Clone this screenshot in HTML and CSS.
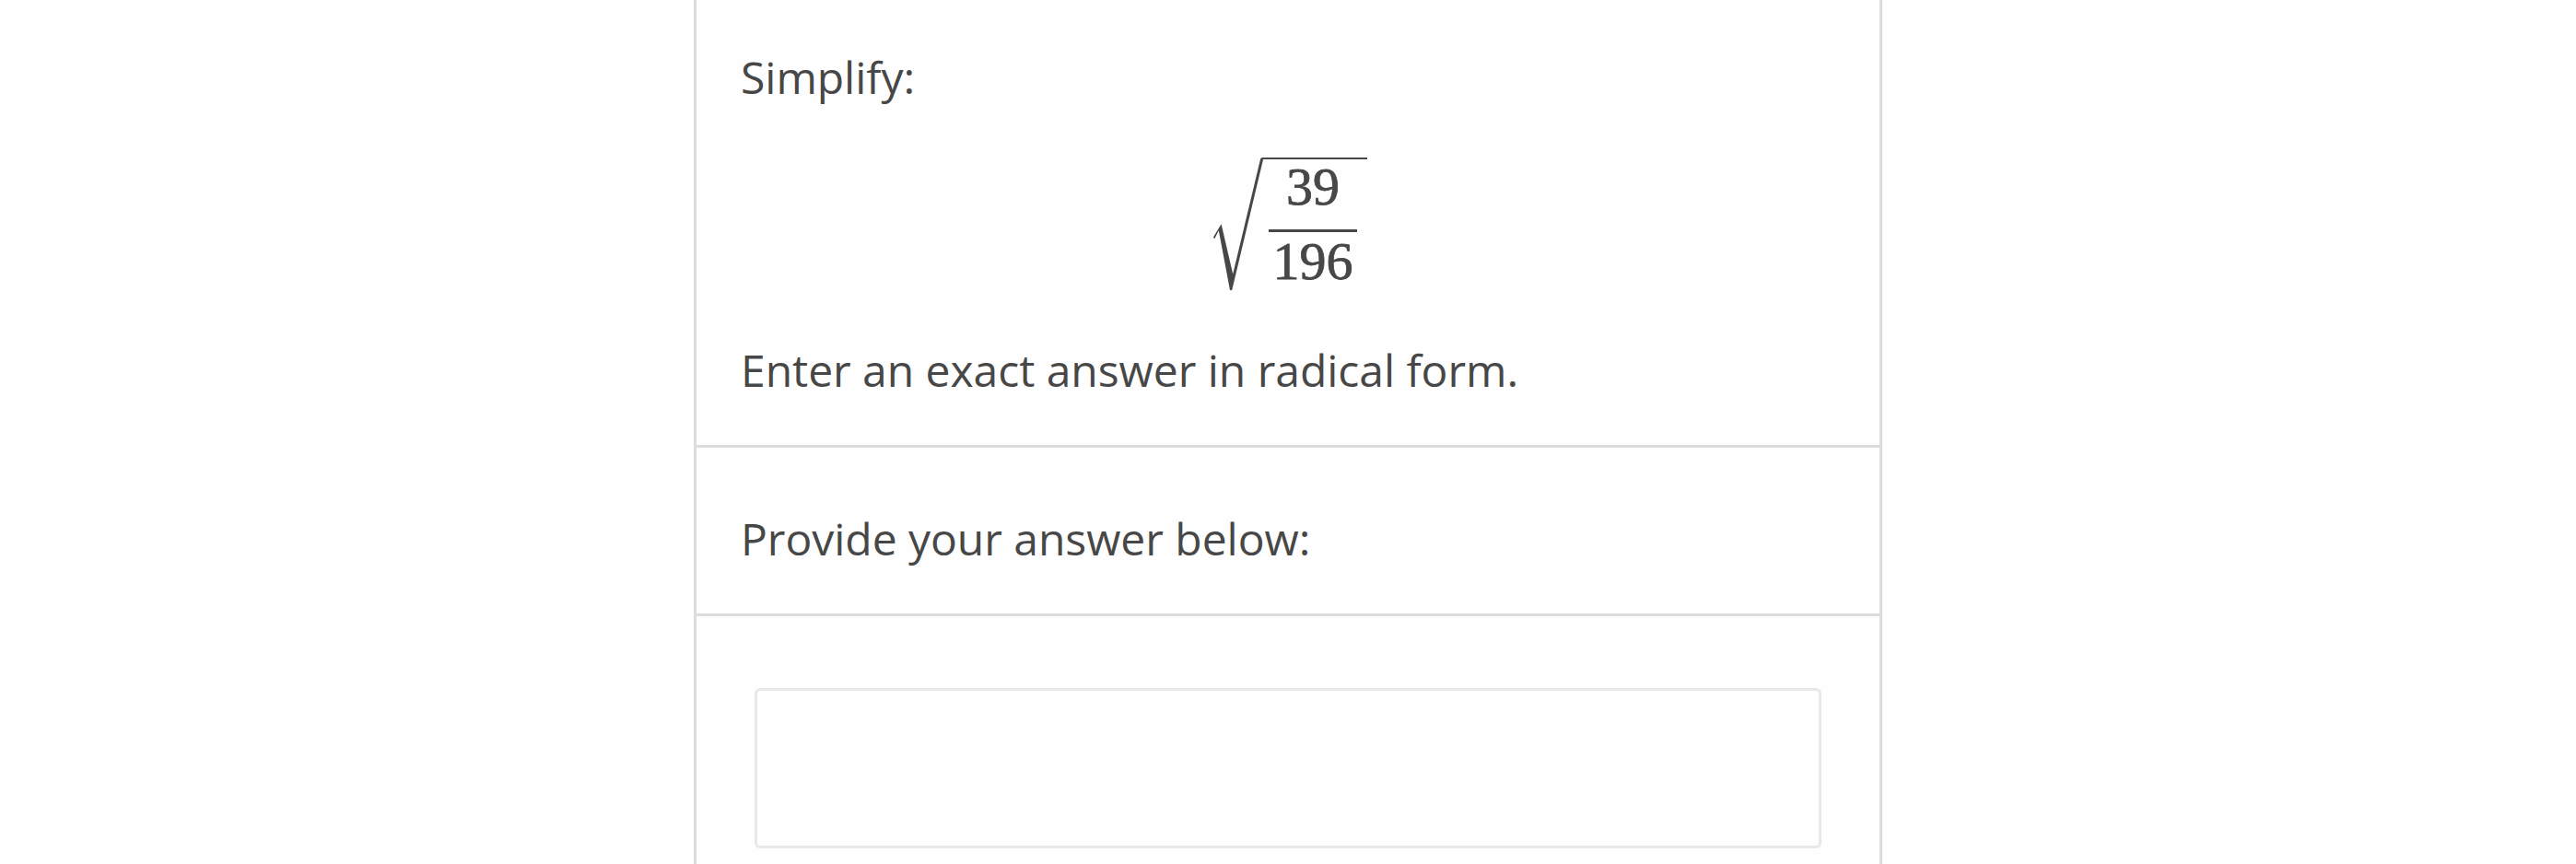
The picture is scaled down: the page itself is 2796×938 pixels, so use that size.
FILE: index.html
```html
<!DOCTYPE html>
<html lang="en">
<head>
<meta charset="utf-8">
<title>Simplify</title>
<link rel="stylesheet" href="styles.css">
</head>
<body>
<main class="panel">
  <section class="question">
    <p class="text">Simplify:</p>
    <div class="formula">
      <svg class="radical" viewBox="0 0 58 144" aria-hidden="true"><path d="M5 86.4 13.6 72.3 26.2 126.5 56.1 1.6Q56.6 0 58 0H59V2.3L25.2 144H23L10.8 79.3 6.3 88.2Z"/></svg>
      <div class="radicand">
        <div class="fraction">
          <span class="numerator">39</span>
          <span class="denominator">196</span>
        </div>
      </div>
    </div>
    <p class="text">Enter an exact answer in radical form.</p>
  </section>
  <section class="prompt">
    <label class="text" for="answer">Provide your answer below:</label>
  </section>
  <section class="response">
    <input class="answer" id="answer" type="text">
  </section>
</main>
</body>
</html>
```
FILE: styles.css
```css
* { box-sizing: border-box; }
body {
  margin: 0;
  height: 938px;
  overflow: hidden;
  background: #fefefe;
  color: #474747;
}
.panel {
  width: 1290px;
  height: 938px;
  margin-left: 753px;
  border: solid #dcdcdc;
  border-width: 0 3px;
}
.text {
  display: block;
  margin: 0;
  font: 48px/66px "Open Sans", sans-serif;
  letter-spacing: -0.03px;
}
.question {
  height: 486px;
  padding: 51px 48px 0;
  border-bottom: 3px solid #dcdcdc;
}
.formula {
  display: flex;
  justify-content: center;
  height: 144px;
  margin: 54px 0;
}
.radical {
  width: 58px;
  height: 144px;
  overflow: visible;
  fill: currentColor;
}
.radicand {
  width: 114px;
  height: 144px;
  padding: 0 11px 0 7px;
  border-top: 2px solid currentColor;
}
.fraction {
  display: flex;
  flex-direction: column;
  font: 58px/64px "Liberation Serif", serif;
  text-align: center;
  -webkit-text-stroke: 0.8px currentColor;
}
.numerator {
  height: 79px;
  line-height: 60px;
  border-bottom: 3px solid currentColor;
}
.denominator { height: 64px; }
.prompt {
  height: 183px;
  padding: 66px 48px 0;
  border-bottom: 3px solid #dcdcdc;
}
.response { padding: 78px 63px 0; }
.answer {
  display: block;
  width: 1158px;
  height: 174px;
  padding: 0 24px;
  border: 3px solid #e8e8e8;
  border-radius: 6px;
  outline: 0;
  background: #fefefe;
  font: 48px "Open Sans", sans-serif;
}
```
